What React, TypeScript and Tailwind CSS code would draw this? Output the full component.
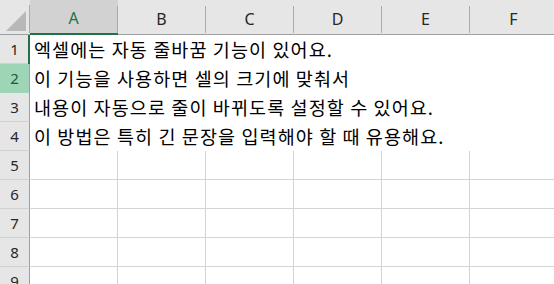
const columns = ['A', 'B', 'C', 'D', 'E', 'F'];

const lines = [
  '엑셀에는 자동 줄바꿈 기능이 있어요.',
  '이 기능을 사용하면 셀의 크기에 맞춰서',
  '내용이 자동으로 줄이 바뀌도록 설정할 수 있어요.',
  '이 방법은 특히 긴 문장을 입력해야 할 때 유용해요.',
];

const uiFont = { fontFamily: '"Noto Sans", "Liberation Sans", sans-serif' };
const cellFont = { fontFamily: '"Noto Sans CJK KR", "Noto Sans", sans-serif' };

function ColumnHeader({ label }: { label: string }) {
  const selected = label === 'A';
  return (
    <div
      className={`relative flex w-[88px] shrink-0 h-[35px] ${
        selected ? 'bg-[#d2d2d2] border-b-2 border-[#217346]' : 'bg-[#e6e6e6] border-b border-[#9e9e9e]'
      }`}
    >
      <div
        className={`flex-1 flex items-center justify-center pt-[3px] text-[16px] ${
          selected ? 'text-[#217346]' : 'text-[#262626]'
        }`}
        style={uiFont}
      >
        {label}
      </div>
      <div className="w-px h-[27px] mt-[6px] bg-[#ababab]" />
    </div>
  );
}

function Row({ n, text }: { n: number; text?: string }) {
  const selected = n === 2;
  const filled = text !== undefined;
  return (
    <div className="flex h-[29px]">
      <div
        className={`relative w-[30px] shrink-0 flex items-center justify-center border-r border-b text-[15px] border-r-[#9e9e9e] ${
          selected ? 'bg-[#9fd5b7] text-[#185c37] border-b-[#9fd5b7]' : 'bg-[#e6e6e6] text-[#262626] border-b-[#d0d0d0]'
        }`}
        style={uiFont}
      >
        {n}
        {/* active cell edge */}
        {n === 1 && <div className="absolute right-[-1px] top-0 w-[2px] h-[29px] bg-[#217346]" />}
      </div>
      {filled ? (
        <div className="flex-1 flex items-center pl-[4px] bg-white">
          <span className="whitespace-nowrap text-[18.5px] tracking-[1.1px] text-black" style={cellFont}>
            {text}
          </span>
        </div>
      ) : (
        columns.map((c) => (
          <div key={c} className="w-[88px] shrink-0 border-r border-b border-[#d4d4d4] bg-white" />
        ))
      )}
    </div>
  );
}

export default function App() {
  return (
    <div className="w-[554px] h-[284px] overflow-hidden bg-white select-none">
      <div className="flex h-[35px]">
        <div className="relative w-[30px] shrink-0 h-[35px] bg-[#e6e6e6] border-b border-[#9e9e9e] flex">
          <svg width="29" height="34" className="shrink-0">
            <polygon points="6,31 26,31 26,11" fill="#b8b8b8" />
          </svg>
          <div className="w-px h-[28px] mt-[5px] bg-[#ababab]" />
        </div>
        {columns.map((c) => (
          <ColumnHeader key={c} label={c} />
        ))}
      </div>
      {lines.map((t, i) => (
        <Row key={i} n={i + 1} text={t} />
      ))}
      {[5, 6, 7, 8, 9].map((n) => (
        <Row key={n} n={n} />
      ))}
    </div>
  );
}
